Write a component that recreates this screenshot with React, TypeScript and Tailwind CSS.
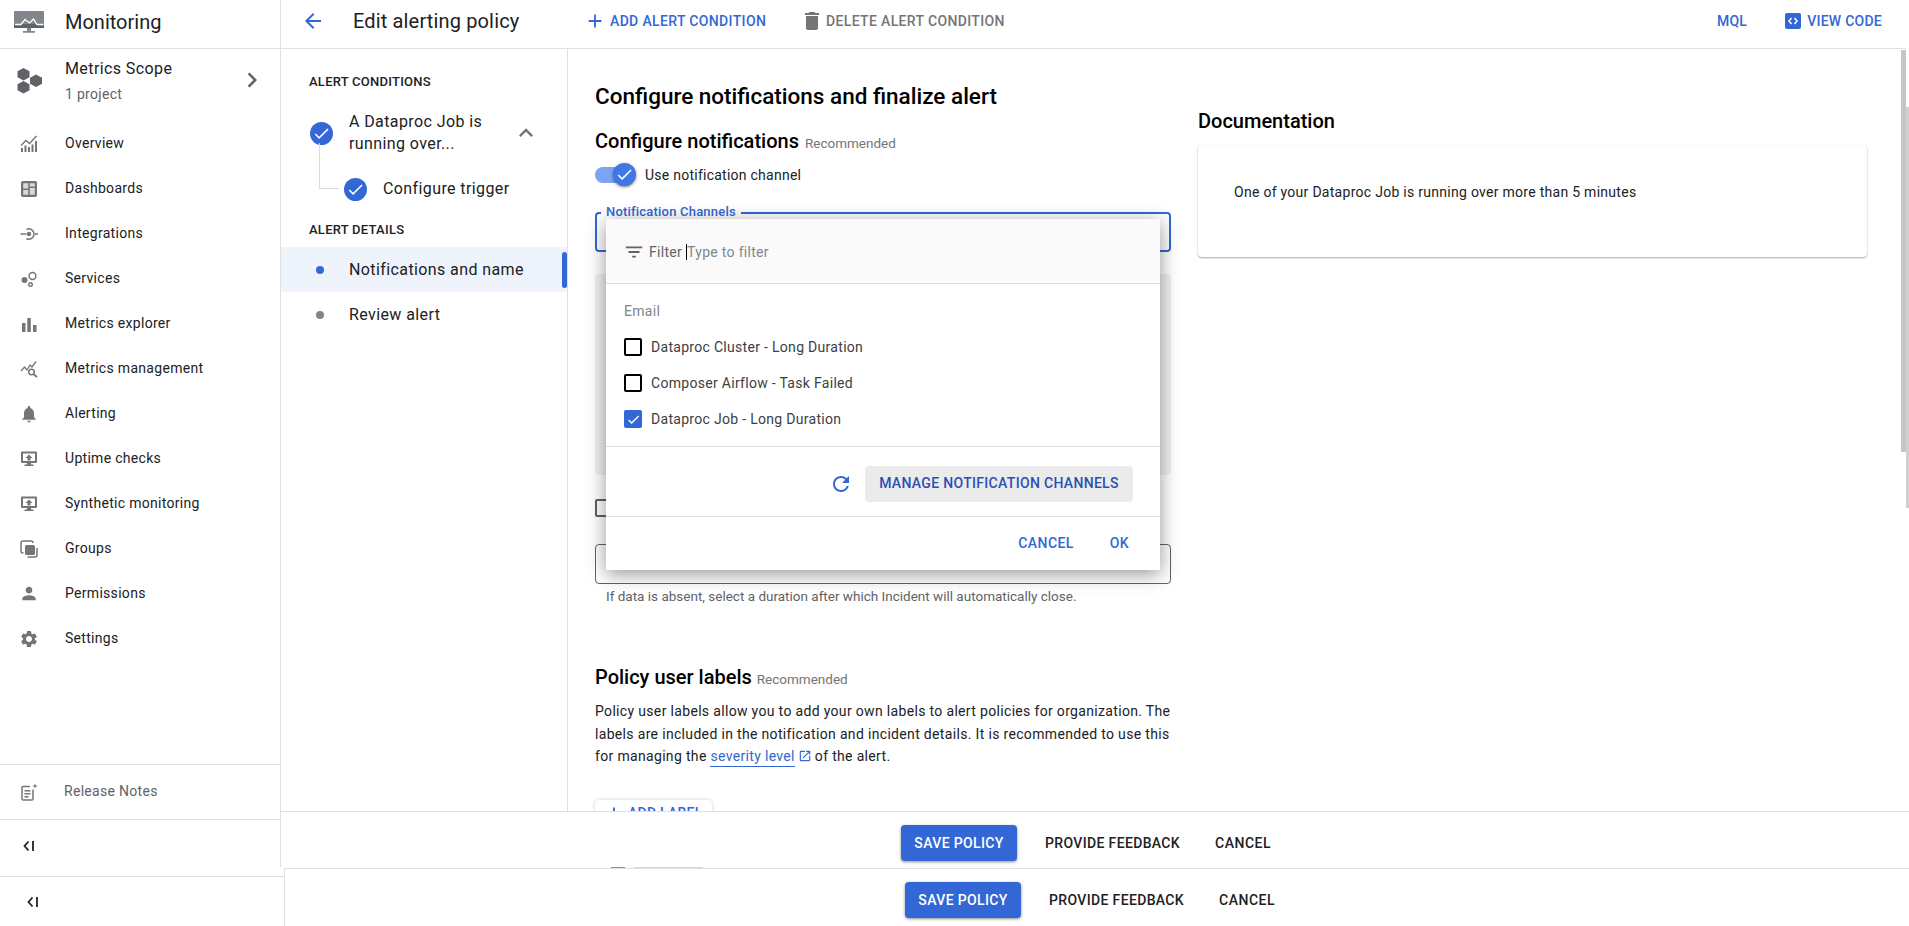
import React from "react";
import {
  MdAdd, MdArrowBack, MdCheck, MdChevronRight, MdDelete, MdExpandLess,
  MdFilterList, MdNotifications, MdOpenInNew, MdPerson, MdRefresh, MdSettings,
} from "react-icons/md";

const G = "#757575";

const Svg = ({ children }: { children: React.ReactNode }) => (
  <svg width="18" height="18" viewBox="0 0 18 18" fill="none">{children}</svg>
);

const MonitorUp = () => (
  <Svg>
    <path d="M2 1.5h14a1 1 0 0 1 1 1V12a1 1 0 0 1-1 1H2a1 1 0 0 1-1-1V2.500a1 1 0 0 1 1-1z" fill={G} />
    <rect x="3" y="3.500" width="12" height="7.500" fill="#fff" />
    <path d="M9 4.500 12.500 8H10.500v2.500h-3V8H5.500z" fill={G} />
    <path d="M7 13h4v1.500h2.500V16h-9v-1.500H7z" fill={G} />
  </Svg>
);

const navIcons: Record<string, React.ReactNode> = {
  Overview: (
    <Svg>
      <path d="M1 10.500 6 5.500l3.500 3L16.500 1" stroke={G} strokeWidth="1.400" />
      <path d="M1 13h2v4H1zM4.500 10.500h2V17h-2zM8 12h2v5H8zM11.500 9.500h2V17h-2zM15 6h2v11h-2z" fill={G} />
    </Svg>
  ),
  Dashboards: (
    <Svg>
      <rect x="1" y="1" width="16" height="16" rx="2" fill={G} />
      <path d="M3.200 3.200h5v5.300h-5zM9.800 3.200h5v3.300h-5zM3.200 10h5v4.800h-5zM9.800 8h5v6.800h-5z" fill="#d9d9d9" />
    </Svg>
  ),
  Integrations: (
    <Svg>
      <path d="M0.500 9h6M14.500 9h3.500" stroke={G} strokeWidth="1.500" />
      <circle cx="9" cy="9" r="2.200" fill={G} />
      <path d="M6.500 4.200a5.300 5.300 0 1 1 0 9.600" stroke={G} strokeWidth="1.500" />
    </Svg>
  ),
  Services: (
    <Svg>
      <circle cx="4.500" cy="10" r="3" fill={G} />
      <circle cx="12.500" cy="6" r="3.400" stroke={G} strokeWidth="1.500" />
      <circle cx="10.500" cy="14.500" r="1.800" stroke={G} strokeWidth="1.400" />
    </Svg>
  ),
  "Metrics explorer": (
    <Svg>
      <path d="M2 8h3.500v9H2zM7.300 3h3.500v14H7.300zM13 10h3.500v7H13z" fill={G} />
    </Svg>
  ),
  "Metrics management": (
    <Svg>
      <path d="M1 11l3.500-4 2.500 3 3-5 2 2 4-5.500" stroke={G} strokeWidth="1.300" />
      <circle cx="11.500" cy="12" r="2.800" stroke={G} strokeWidth="1.500" />
      <path d="M13.500 14l3.500 3.200" stroke={G} strokeWidth="1.700" />
    </Svg>
  ),
  Alerting: <MdNotifications size={20} color={G} />,
  "Uptime checks": <MonitorUp />,
  "Synthetic monitoring": <MonitorUp />,
  Groups: (
    <Svg>
      <path d="M3.500 13H3a2 2 0 0 1-2-2V3a2 2 0 0 1 2-2h8a2 2 0 0 1 2 2" stroke={G} strokeWidth="1.500" />
      <rect x="5" y="5" width="10" height="10" rx="1.500" fill={G} />
      <path d="M17 8v7a2 2 0 0 1-2 2H7.500" stroke={G} strokeWidth="1.500" />
    </Svg>
  ),
  Permissions: <MdPerson size={21} color={G} />,
  Settings: <MdSettings size={20} color={G} />,
};

const nav = [
  "Overview", "Dashboards", "Integrations", "Services", "Metrics explorer", "Metrics management",
  "Alerting", "Uptime checks", "Synthetic monitoring", "Groups", "Permissions", "Settings",
];

const Collapse = () => (
  <svg width="12" height="12" viewBox="0 0 12 12" fill="none">
    <path d="M5.500 1.500 1.500 6l4 4.500" stroke="#202124" strokeWidth="1.800" />
    <path d="M10 1v10" stroke="#202124" strokeWidth="1.800" />
  </svg>
);

const StepCheck = () => (
  <span className="flex h-[23px] w-[23px] shrink-0 items-center justify-center rounded-full bg-[#3367d6]">
    <MdCheck size={19} color="#fff" />
  </span>
);

const Sidebar = () => (
  <aside className="flex h-[867px] w-[281px] shrink-0 flex-col border-r border-[#e0e0e0]">
    <div className="flex h-[49px] shrink-0 items-center border-b border-[#e0e0e0] pb-[5px]">
      <svg className="ml-[14px]" width="30" height="22" viewBox="0 0 30 22">
        <rect x="0" y="0" width="30" height="17" rx="1" fill="#80868b" />
        <rect x="0" y="13" width="30" height="4" fill="#5f6368" />
        <path d="M1 13.500h6l4-5 4.500 3.500 4-4 3.500 5.500h6.500" stroke="#fff" strokeWidth="1.300" fill="none" />
        <path d="M13 17h4v3h4v1.800H9V20h4z" fill="#80868b" />
      </svg>
      <span className="ml-[21px] text-[20px] text-[#202124]">Monitoring</span>
    </div>
    <div className="flex h-[72px] shrink-0 items-start">
      <svg className="ml-[17px] mt-[19px]" width="26" height="26" viewBox="0 0 26 26">
        <path d="M6.500 0 12.500 3.200v6L6.500 12.500 .5 9.200v-6z" fill="#5f6368" />
        <path d="M6.500 13 12.500 16.200v6L6.500 25.500 .5 22.200v-6z" fill="#5f6368" />
        <path d="M19 6.500 25 9.700v6L19 19 13 15.700v-6z" fill="#5f6368" />
      </svg>
      <div className="ml-[22px] mt-[9px] w-[165px]">
        <div className="text-[16px] leading-[22px] tracking-[0.4px] text-[#202124]">Metrics Scope</div>
        <div className="mt-[4px] text-[14px] leading-[20px] tracking-[0.3px] text-[#5f6368]">1 project</div>
      </div>
      <MdChevronRight size={30} color="#5f6368" className="ml-[7px] mt-[16px]" />
    </div>
    {nav.map((n) => (
      <div key={n} className="flex h-[45px] shrink-0 items-center text-[14px] tracking-[0.3px] text-[#202124]">
        <span className="ml-[19px] flex w-[20px] justify-center">{navIcons[n]}</span>
        <span className="ml-[26px]">{n}</span>
      </div>
    ))}
    <div className="flex-1" />
    <div className="flex h-[56px] shrink-0 items-center border-y border-[#e0e0e0] pb-[1px] text-[14px] tracking-[0.3px] text-[#5f6368]">
      <svg className="ml-[20px]" width="18" height="18" viewBox="0 0 18 18" fill="none">
        <path d="M13 6.500V16a1 1 0 0 1-1 1H3a1 1 0 0 1-1-1V4.500a1 1 0 0 1 1-1h7" stroke={G} strokeWidth="1.500" />
        <path d="M4.500 7h6v1.500h-6zM4.500 10h6v1.500h-6zM4.500 13h4v1.500h-4z" fill={G} />
        <path d="M15 .5l.7 1.800 1.800.7-1.800.7L15 5.500l-.7-1.800L12.500 3l1.800-.7z" fill={G} />
      </svg>
      <span className="ml-[26px]">Release Notes</span>
    </div>
    <div className="flex h-[47px] shrink-0 items-center pt-[5px] pl-[23px]"><Collapse /></div>
  </aside>
);

const Toolbar = () => (
  <div className="flex h-[49px] w-[1625px] shrink-0 items-center border-b border-[#e0e0e0] pb-[6px] pr-[24px] text-[14px] font-medium text-[#3367d6]">
    <MdArrowBack size={24} color="#3367d6" className="ml-[20px] shrink-0" />
    <span className="ml-[28px] w-[231px] shrink-0 text-[20px] font-normal tracking-[0.15px] text-[#202124]">Edit alerting policy</span>
    <MdAdd size={22} color="#3367d6" className="shrink-0" />
    <span className="ml-[4px] w-[190px] shrink-0 tracking-[0.35px]">ADD ALERT CONDITION</span>
    <MdDelete size={24} color="#757575" className="shrink-0" />
    <span className="ml-[2px] tracking-[0.35px] text-[#757575]">DELETE ALERT CONDITION</span>
    <span className="ml-auto tracking-[0.25px]">MQL</span>
    <span className="ml-[38px] flex h-[16px] w-[16px] items-center justify-center rounded-[2px] bg-[#3367d6]">
      <svg width="10" height="8" viewBox="0 0 10 8" fill="none">
        <path d="M3.500 1 1 4l2.500 3M6.500 1 9 4 6.500 7" stroke="#fff" strokeWidth="1.500" />
      </svg>
    </span>
    <span className="ml-[6px] tracking-[0.25px]">VIEW CODE</span>
  </div>
);

const Steps = () => (
  <div className="relative h-full w-[287px] shrink-0 border-r border-[#e0e0e0] text-[#202124]">
    <div className="ml-[28px] mt-[25px] h-[16px] text-[13px] font-medium leading-[16px] tracking-[0.25px]">ALERT CONDITIONS</div>
    <div className="relative mt-[21px] flex h-[44px] items-center pl-[29px]">
      <StepCheck />
      <span className="ml-[16px] w-[150px] text-[16px] leading-[22px] tracking-[0.4px]">A Dataproc Job is running over...</span>
      <MdExpandLess size={28} color="#757575" className="ml-[13px]" />
      <div className="absolute left-[38px] top-[32px] h-[46px] w-[20px] border-b border-l border-[#dadce0]" />
    </div>
    <div className="mt-[18px] flex h-[32px] items-center pl-[63px]">
      <StepCheck />
      <span className="ml-[16px] text-[16px] tracking-[0.4px]">Configure trigger</span>
    </div>
    <div className="ml-[28px] mt-[17px] h-[16px] text-[13px] font-medium leading-[16px] tracking-[0.25px]">ALERT DETAILS</div>
    <div className="relative mt-[9px] flex h-[45px] items-center bg-[#eff4fc] pl-[35px] text-[16px] tracking-[0.4px]">
      <span className="h-[8px] w-[8px] rounded-full bg-[#3367d6]" />
      <span className="ml-[25px]">Notifications and name</span>
      <span className="absolute right-0 top-[5px] h-[36px] w-[5px] rounded-[3px] bg-[#3367d6]" />
    </div>
    <div className="flex h-[45px] items-center pl-[35px] text-[16px] tracking-[0.4px]">
      <span className="h-[8px] w-[8px] rounded-full bg-[#80868b]" />
      <span className="ml-[25px]">Review alert</span>
    </div>
  </div>
);

const Option = ({ label, checked }: { label: string; checked?: boolean }) => (
  <div className="flex h-[36px] items-center pl-[18px] text-[14px] tracking-[0.3px] text-[#3c4043]">
    {checked ? (
      <span className="flex h-[18px] w-[18px] items-center justify-center rounded-[2px] bg-[#3367d6]">
        <MdCheck size={15} color="#fff" />
      </span>
    ) : (
      <span className="h-[18px] w-[18px] rounded-[2px] border-2 border-black" />
    )}
    <span className="ml-[9px]">{label}</span>
  </div>
);

const Dialog = () => (
  <div className="absolute left-[38px] top-[170px] flex h-[351px] w-[554px] flex-col bg-white shadow-[0_4px_18px_rgba(0,0,0,0.42)]">
    <div className="flex h-[65px] shrink-0 items-center border-b border-[#dedede] bg-[#fafafa] pl-[17px] pt-[2px] text-[14px] tracking-[0.3px]">
      <MdFilterList size={22} color="#5f6368" />
      <span className="ml-[4px] text-[#5f6368]">Filter</span>
      <span className="ml-[4px] h-[16px] w-px bg-black" />
      <span className="text-[#80868b]">Type to filter</span>
    </div>
    <div className="h-[163px] shrink-0 border-b border-[#dedede]">
      <div className="mb-[8px] ml-[18px] mt-[17px] text-[14px] leading-[20px] tracking-[0.3px] text-[#80868b]">Email</div>
      <Option label="Dataproc Cluster - Long Duration" />
      <Option label="Composer Airflow - Task Failed" />
      <Option label="Dataproc Job - Long Duration" checked />
    </div>
    <div className="flex h-[70px] shrink-0 items-center justify-end gap-[12px] border-b border-[#dedede] pr-[27px] pt-[4px]">
      <MdRefresh size={24} color="#3367d6" />
      <span className="flex h-[36px] w-[268px] items-center justify-center rounded-[4px] bg-[#ebebeb] text-[14px] font-medium tracking-[0.32px] text-[#2b4fb5]">MANAGE NOTIFICATION CHANNELS</span>
    </div>
    <div className="flex flex-1 items-center justify-end gap-[36px] pr-[31px] text-[14px] font-medium tracking-[0.4px] text-[#3367d6]">
      <span>CANCEL</span>
      <span>OK</span>
    </div>
  </div>
);

const Main = () => (
  <div className="relative h-full flex-1 overflow-hidden">
    <div className="flex pl-[27px]">
      <div className="w-[576px] shrink-0 text-[#202124]">
        <h1 className="mt-[33px] text-[22.5px] font-medium leading-[28px] text-black">Configure notifications and finalize alert</h1>
        <div className="mt-[16px] flex h-[24px] items-baseline">
          <span className="text-[20px] font-medium text-black">Configure notifications</span>
          <span className="ml-[6px] text-[13.5px] text-[#757575]">Recommended</span>
        </div>
        <div className="mt-[13px] flex h-[24px] items-center">
          <span className="relative h-[16px] w-[35px] rounded-full bg-[#7ba4f5]">
            <span className="absolute left-[18px] top-[-4px] flex h-[23px] w-[23px] items-center justify-center rounded-full bg-[#3f77e4] shadow-[0_1px_3px_rgba(0,0,0,0.5)]">
              <MdCheck size={19} color="#fff" />
            </span>
          </span>
          <span className="ml-[15px] text-[14px] tracking-[0.25px]">Use notification channel</span>
        </div>
        <div className="relative mt-[25px] h-[40px] rounded-[4px] border-2 border-[#3367d6]">
          <span className="absolute left-[4px] top-[-10px] bg-white px-[5px] text-[13px] font-medium leading-[16px] tracking-[0.2px] text-[#3367d6]">Notification Channels</span>
        </div>
        <div className="mt-[22px] h-[201px] rounded-[4px] bg-[#f1f1f1]" />
        <div className="mt-[24px] h-[18px] w-[18px] rounded-[2px] border-2 border-[#5f6368]" />
        <div className="mt-[27px] h-[40px] rounded-[4px] border border-[#5f6368]" />
        <p className="ml-[11px] mt-[4px] text-[13.5px] leading-[16px] text-[#5f6368]">If data is absent, select a duration after which Incident will automatically close.</p>
        <div className="mt-[58px] flex h-[24px] items-baseline">
          <span className="text-[20px] font-medium text-black">Policy user labels</span>
          <span className="ml-[5px] text-[13.5px] text-[#757575]">Recommended</span>
        </div>
        <p className="mt-[14px] text-[14px] leading-[22.5px] tracking-[0.33px]">
          Policy user labels allow you to add your own labels to alert policies for organization. The labels are included in the notification and incident details. It is recommended to use this for managing the{" "}
          <span className="border-b border-[#3367d6] pb-[2px] text-[#3367d6]">severity level</span>
          <MdOpenInNew size={14} color="#3367d6" className="mx-[3px] inline align-[-2px]" />
          of the alert.
        </p>
        <div className="mt-[32px] flex h-[36px] w-[117px] items-center rounded-[4px] bg-white pb-[8px] pl-[8px] text-[14px] font-medium tracking-[0.25px] text-[#3367d6] shadow-[0_0_4px_rgba(0,0,0,0.18)]">
          <MdAdd size={22} color="#3367d6" />
          <span className="ml-[3px]">ADD LABEL</span>
        </div>
      </div>
      <div className="ml-[27px] w-[669px] shrink-0">
        <h2 className="mt-[60px] text-[20px] font-medium leading-[24px] text-black">Documentation</h2>
        <div className="mt-[12px] flex h-[112px] items-center rounded-[4px] bg-white pb-[18px] pl-[36px] text-[14px] tracking-[0.28px] text-[#202124] shadow-[0_1px_2px_rgba(0,0,0,0.35)]">
          One of your Dataproc Job is running over more than 5 minutes
        </div>
      </div>
    </div>
    <Dialog />
  </div>
);

const ActionBar = () => (
  <div className="relative flex items-center pl-[620px] text-[14px] font-medium tracking-[0.35px] text-[#202124]">
    <span className="flex h-[36px] w-[116px] items-center justify-center rounded-[4px] bg-[#3367d6] text-white shadow-[0_1px_3px_rgba(0,0,0,0.45)]">SAVE POLICY</span>
    <span className="ml-[28px]">PROVIDE FEEDBACK</span>
    <span className="ml-[35px] tracking-[0.5px]">CANCEL</span>
  </div>
);

export default function App() {
  return (
    <div className="relative h-[926px] w-[1909px] overflow-hidden bg-white font-['Roboto',sans-serif]">
      <div className="flex h-[868px]">
        <Sidebar />
        <div className="flex min-w-0 flex-1 flex-col">
          <Toolbar />
          <div className="flex h-[762px] shrink-0">
            <Steps />
            <Main />
          </div>
          <div className="relative flex h-[57px] shrink-0 items-center border-t border-[#e0e0e0] pt-[6px]">
            <ActionBar />
            <span className="absolute bottom-0 left-[330px] h-px w-[14px] bg-[#6f93e3]" />
            <span className="absolute bottom-0 left-[353px] h-px w-[69px] bg-[#c8d6f4]" />
          </div>
        </div>
      </div>
      <div className="flex h-[58px]">
        <div className="h-full w-[285px] shrink-0 border-r border-[#e0e0e0] pt-[8px]">
          <div className="flex h-[50px] items-center border-t border-[#e0e0e0] pl-[27px]"><Collapse /></div>
        </div>
        <div className="flex flex-1 items-center border-t border-[#e0e0e0] pt-[5px]">
          <ActionBar />
        </div>
      </div>
      <div className="absolute left-[1901px] top-[50px] h-[402px] w-[5px] bg-[#c6c6c6]" />
      <div className="absolute left-[1906px] top-[107px] h-[401px] w-[3px] bg-[#cfcfcf]" />
    </div>
  );
}
